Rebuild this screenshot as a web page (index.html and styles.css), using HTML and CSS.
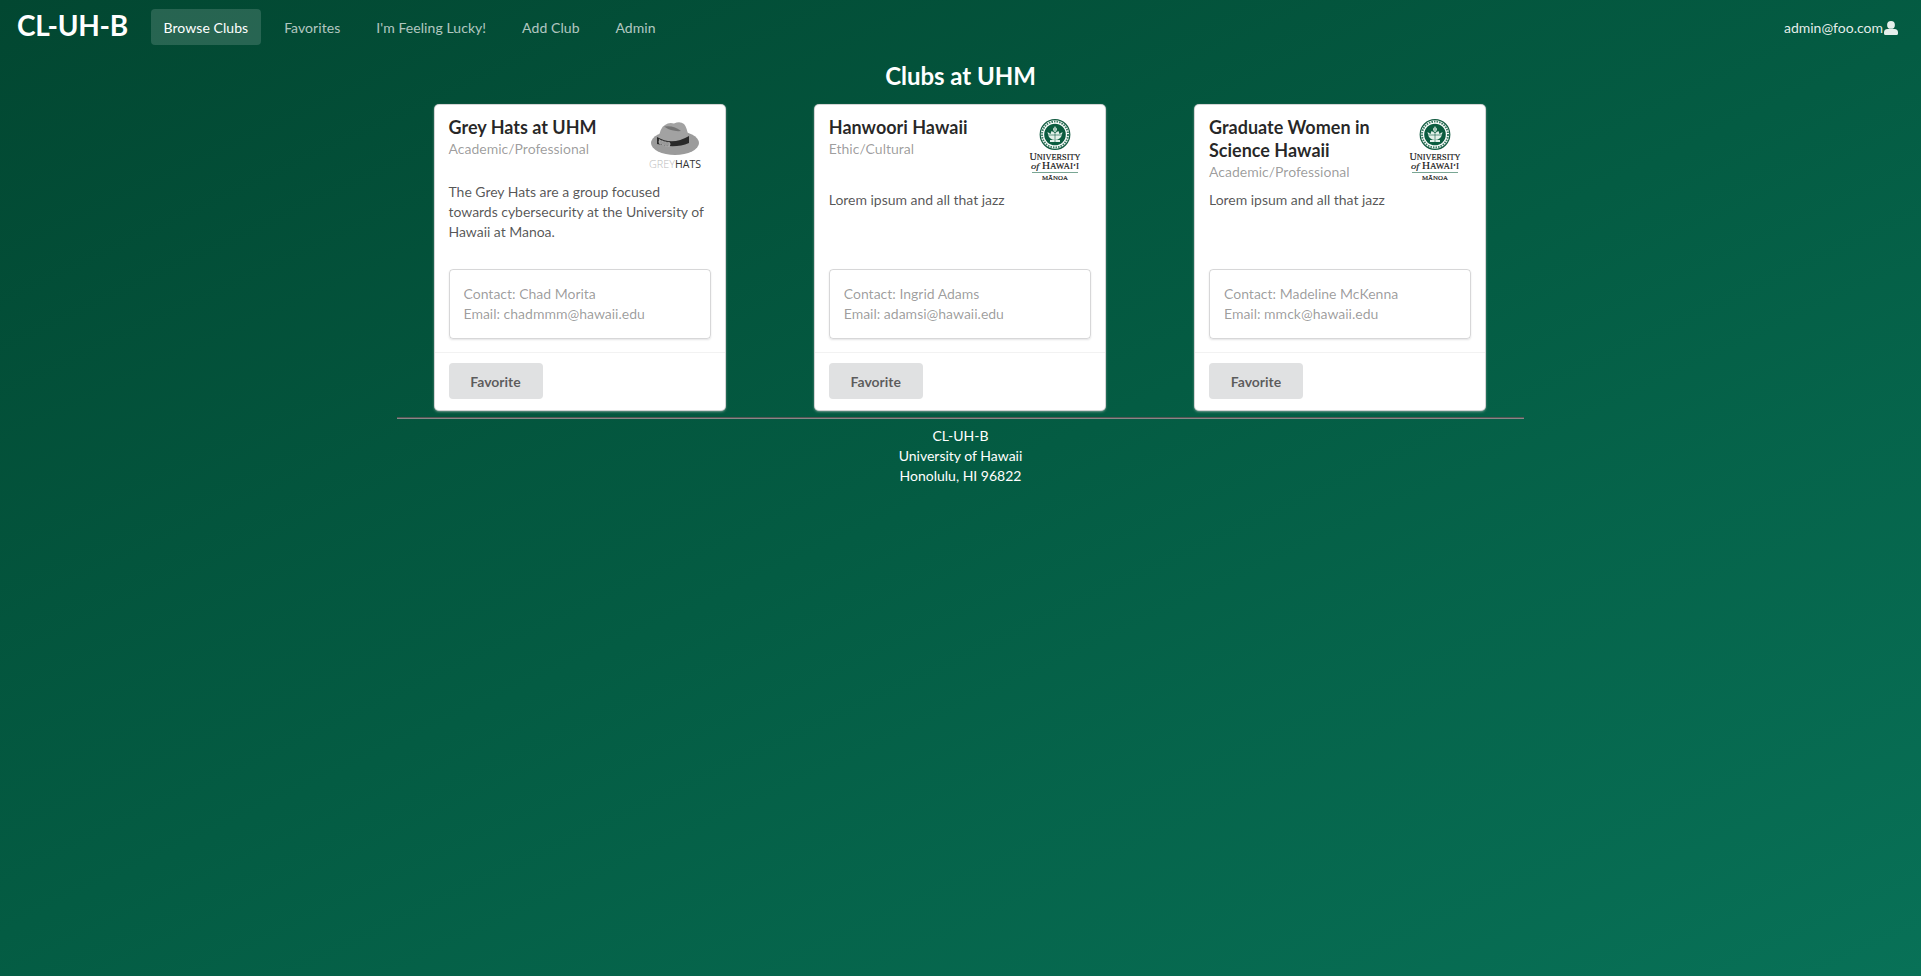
FILE: index.html
```html
<!DOCTYPE html>
<html lang="en">
<head>
<meta charset="utf-8">
<title>CL-UH-B</title>
<link rel="stylesheet" href="styles.css">
</head>
<body>
<nav class="menu">
  <h1 class="brand">CL-UH-B</h1>
  <a class="item active">Browse Clubs</a>
  <a class="item">Favorites</a>
  <a class="item">I'm Feeling Lucky!</a>
  <a class="item">Add Club</a>
  <a class="item">Admin</a>
  <div class="user">admin@foo.com<svg class="user-icon" viewBox="0 0 14 14"><circle cx="7" cy="3.900" r="3.900"/><path d="M3.500 8h7A3.500 3.500 0 0 1 14 11.500V12.500Q14 14 12.500 14H1.500Q0 14 0 12.500V11.500A3.500 3.500 0 0 1 3.500 8Z"/></svg></div>
</nav>
<main class="container">
  <h2 class="title">Clubs at UHM</h2>
  <div class="grid">
    <article class="card">
      <div class="content">
        <header class="head short">
          <div class="heading"><h3>Grey Hats at UHM</h3><p class="meta">Academic/Professional</p></div>
          <svg class="logo hat" viewBox="0 0 54 52">
            <ellipse cx="27" cy="25" rx="24" ry="12" fill="#9b9b9b"/>
            <path d="M10 23Q12 9 17 7Q21 4 26 5.500Q32 3 36 6Q39 9 41 21Q31 30 10 27Z" fill="#a2a2a2"/>
            <path d="M16 8.500Q26 7 33 13Q24 14 16 8.500Z" fill="#737373"/>
            <path d="M9 19Q24 28 41 18V25Q27 31 9 26Z" fill="#292929"/>
            <path d="M11 21.500Q16 24 22 24.500V28Q15 28 11 25.500Z" fill="#999" stroke="#ddd" stroke-width=".5" stroke-dasharray="2 1"/>
            <text x="1" y="50" font-size="10.500" font-family="Open Sans, sans-serif" font-weight="300" textLength="26" lengthAdjust="spacingAndGlyphs" fill="#bbb">GREY</text>
            <text x="27" y="50" font-size="10.500" font-family="Open Sans, sans-serif" textLength="26" lengthAdjust="spacingAndGlyphs" fill="#333">HATS</text>
          </svg>
        </header>
        <p class="description">The Grey Hats are a group focused towards cybersecurity at the University of Hawaii at Manoa.</p>
        <div class="contact">Contact: Chad Morita<br>Email: chadmmm@hawaii.edu</div>
      </div>
      <div class="extra"><button class="button">Favorite</button></div>
    </article>
    <article class="card">
      <div class="content">
        <header class="head">
          <div class="heading"><h3>Hanwoori Hawaii</h3><p class="meta">Ethic/Cultural</p></div>
          <svg class="logo" viewBox="0 0 54 64">
            <circle cx="27" cy="16.500" r="14.800" fill="none" stroke="#10593f" stroke-width="1.200"/>
            <circle cx="27" cy="16.500" r="13" fill="none" stroke="#3d7e66" stroke-width="2" stroke-dasharray="1.6 1"/>
            <circle cx="27" cy="16.500" r="10.800" fill="#0b5c3f"/>
            <path d="M19.500 14q1 8 7.500 8t7.500-8l-3 2-1-3-3.500 2-3.500-2-1 3zM25 11l2-3 2 3-1 3h-2zM22 22h10v2h-10z" fill="#e4f0ea"/>
            <path d="M17 17h20M27 7v20" stroke="#0b5c3f" stroke-width=".6"/>
            <g class="wordmark">
              <text x="27" y="42" font-size="9.600" textLength="51" lengthAdjust="spacingAndGlyphs">U<tspan font-size="7.800">NIVERSITY</tspan></text>
              <text x="27" y="51" font-size="9.600" textLength="48" lengthAdjust="spacingAndGlyphs"><tspan font-style="italic" font-size="9">of</tspan> H<tspan font-size="7.800">AWAI‘I</tspan></text>
              <text x="27" y="62" font-size="6.500" textLength="26" lengthAdjust="spacingAndGlyphs">MĀNOA</text>
            </g>
            <path d="M4 54.500h46" stroke="#79a694"/>
          </svg>
        </header>
        <p class="description">Lorem ipsum and all that jazz</p>
        <div class="contact">Contact: Ingrid Adams<br>Email: adamsi@hawaii.edu</div>
      </div>
      <div class="extra"><button class="button">Favorite</button></div>
    </article>
    <article class="card">
      <div class="content">
        <header class="head">
          <div class="heading"><h3>Graduate Women in Science Hawaii</h3><p class="meta">Academic/Professional</p></div>
          <svg class="logo" viewBox="0 0 54 64">
            <circle cx="27" cy="16.500" r="14.800" fill="none" stroke="#10593f" stroke-width="1.200"/>
            <circle cx="27" cy="16.500" r="13" fill="none" stroke="#3d7e66" stroke-width="2" stroke-dasharray="1.6 1"/>
            <circle cx="27" cy="16.500" r="10.800" fill="#0b5c3f"/>
            <path d="M19.500 14q1 8 7.500 8t7.500-8l-3 2-1-3-3.500 2-3.500-2-1 3zM25 11l2-3 2 3-1 3h-2zM22 22h10v2h-10z" fill="#e4f0ea"/>
            <path d="M17 17h20M27 7v20" stroke="#0b5c3f" stroke-width=".6"/>
            <g class="wordmark">
              <text x="27" y="42" font-size="9.600" textLength="51" lengthAdjust="spacingAndGlyphs">U<tspan font-size="7.800">NIVERSITY</tspan></text>
              <text x="27" y="51" font-size="9.600" textLength="48" lengthAdjust="spacingAndGlyphs"><tspan font-style="italic" font-size="9">of</tspan> H<tspan font-size="7.800">AWAI‘I</tspan></text>
              <text x="27" y="62" font-size="6.500" textLength="26" lengthAdjust="spacingAndGlyphs">MĀNOA</text>
            </g>
            <path d="M4 54.500h46" stroke="#79a694"/>
          </svg>
        </header>
        <p class="description">Lorem ipsum and all that jazz</p>
        <div class="contact">Contact: Madeline McKenna<br>Email: mmck@hawaii.edu</div>
      </div>
      <div class="extra"><button class="button">Favorite</button></div>
    </article>
  </div>
  <hr class="rule">
  <footer class="footer">CL-UH-B<br>University of Hawaii<br>Honolulu, HI 96822</footer>
</main>
</body>
</html>
```
FILE: styles.css
```css
* { box-sizing: border-box; }
body {
  margin: 0;
  min-height: 100vh;
  font: 14px/20px Lato, sans-serif;
  color: #fff;
  background: linear-gradient(155deg, #024731 0%, #045c43 50%, #087157 100%);
}
h1, h2, h3, p { margin: 0; }
.menu { display: flex; align-items: center; height: 54px; padding: 0 23px 0 17px; }
.brand { width: 134px; font-size: 28px; line-height: 36px; margin-top: -4px; letter-spacing: -.3px; }
.item {
  height: 36px;
  padding: 0 12.500px;
  margin-right: 10.900px;
  border-radius: 4px;
  line-height: 37px;
  letter-spacing: .07px;
  color: rgba(255, 255, 255, .7);
}
.item.active { background: rgba(255, 255, 255, .15); color: #fff; }
.user { display: flex; align-items: center; margin: 2px 0 0 auto; color: rgba(255, 255, 255, .9); }
.user-icon { width: 14px; height: 14px; margin-left: 1px; fill: currentColor; }
.container { width: 1127px; margin: 0 auto; }
.title { height: 51px; padding-top: 2px; font-size: 24px; line-height: 40px; text-align: center; letter-spacing: -.05px; }
.grid { display: grid; grid-template-columns: repeat(3, 290px); justify-content: space-between; padding: 0 39px 0 37.500px; }
.card {
  display: flex;
  flex-direction: column;
  height: 305px;
  border-radius: 4px;
  background: #fff;
  box-shadow: 0 1px 3px 0 #d4d4d5, 0 0 0 1px #d4d4d5;
}
.content { display: flex; flex-direction: column; flex: 1; padding: 13px 14px 13px; }
.head { display: flex; justify-content: space-between; height: 72px; }
.head.short { height: 64px; }
.heading { margin-top: -2px; }
h3 { width: 180px; font-size: 18px; line-height: 23px; color: rgba(0, 0, 0, .85); }
.meta { color: rgba(0, 0, 0, .4); }
.logo { width: 54px; height: 64px; margin-right: 9px; flex: none; }
.logo.hat { height: 52px; }
.wordmark {
  font-family: "Liberation Serif", serif;
  fill: #151515;
  stroke: #151515;
  stroke-width: .15;
  text-anchor: middle;
}
.description { color: rgba(0, 0, 0, .68); letter-spacing: -.03px; }
.contact {
  margin-top: auto;
  height: 70px;
  padding: 14px;
  border: 1px solid rgba(34, 36, 38, .18);
  border-radius: 4px;
  box-shadow: 0 1px 2px rgba(34, 36, 38, .12);
  color: rgba(0, 0, 0, .4);
}
.extra { height: 58px; padding: 10px 14px; border-top: 1px solid rgba(0, 0, 0, .05); }
.button {
  display: block;
  width: 94px;
  height: 36px;
  padding: 0;
  border: 0;
  border-radius: 4px;
  background: #e0e1e2;
  color: rgba(0, 0, 0, .6);
  font: bold 14px/38px Lato, sans-serif;
}
.rule { height: 2px; margin: 7px 0; border: 0; border-top: 1px solid #555; border-bottom: 1px solid #888; }
.footer { text-align: center; }
```
